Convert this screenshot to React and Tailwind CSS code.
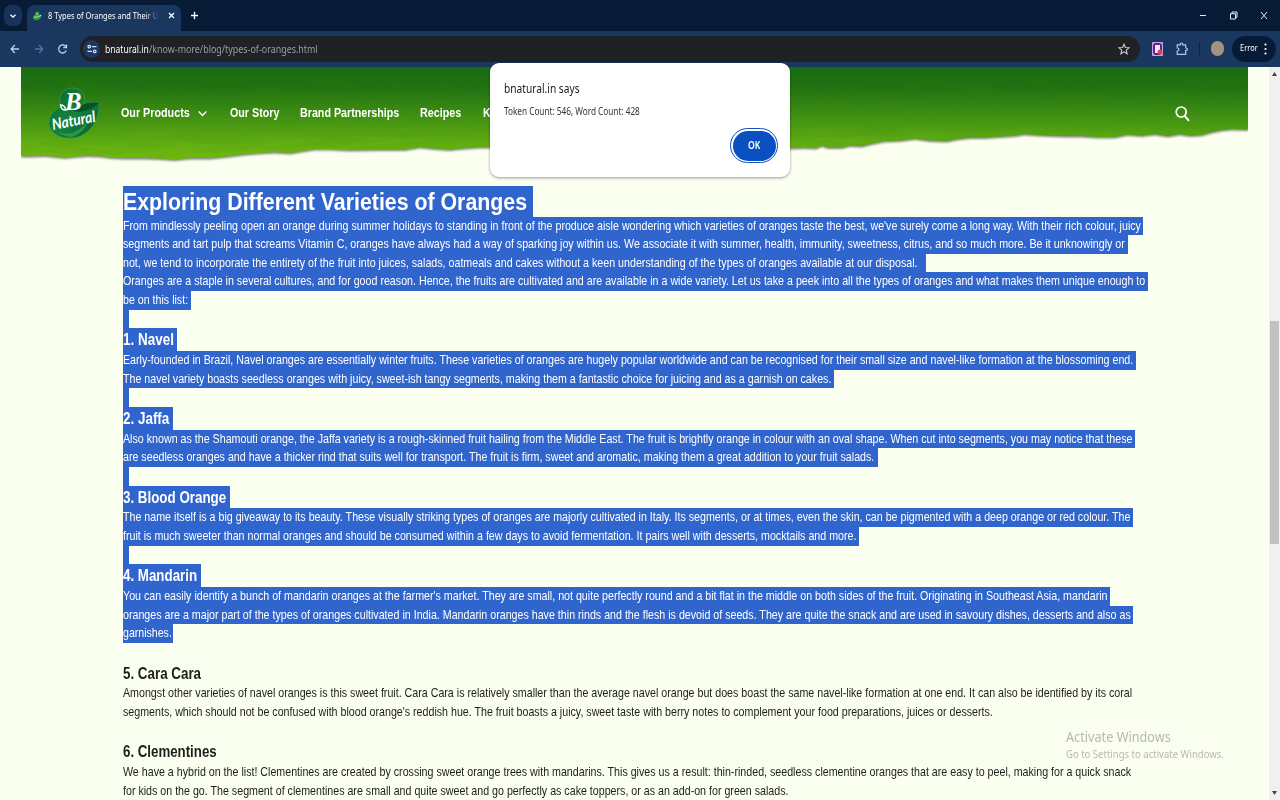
import { useLayoutEffect, useRef } from "react";

// Scales a line of text horizontally so that it spans exactly w pixels.
function Fit({ w, children, className = "" }) {
  const ref = useRef(null);
  useLayoutEffect(() => {
    const el = ref.current;
    el.style.transform = `scaleX(${w / el.offsetWidth})`;
  }, [w, children]);
  return (
    <div className={"shrink-0 " + className} style={{ width: w }}>
      <span ref={ref} className="inline-block origin-left whitespace-pre">{children}</span>
    </div>
  );
}

const X0 = 123.3;

function Line({ l }) {
  const [text, end, bar] = l;
  return (
    <div className="h-[18.61px] leading-[18.6px]">
      <div className={bar ? "h-[18.7px] bg-[#3165ce] text-white" : "h-[18.61px] text-[#1c1f1a]"} style={{ width: (bar || end) - X0 }}>
        <Fit w={end - X0}>{text}</Fit>
      </div>
    </div>
  );
}

function Section({ s }) {
  const sel = s.bar;
  return (
    <section>
      <div className={sel ? "h-[18.61px] w-[6px] bg-[#3165ce]" : "h-[18.61px]"} />
      <h2
        className={sel ? "h-[22.85px] bg-[#3165ce] text-[16px] leading-[23px] font-bold text-white" : "h-[22.85px] text-[16px] leading-[23px] font-bold text-[#1c1f1a]"}
        style={{ width: (s.bar || s.end) - X0 }}
      >
        <Fit w={s.end - X0}>{s.title}</Fit>
      </h2>
      {s.lines.map((l) => <Line key={l[0]} l={l} />)}
    </section>
  );
}

const INTRO = [
  ["From mindlessly peeling open an orange during summer holidays to standing in front of the produce aisle wondering which varieties of oranges taste the best, we've surely come a long way. With their rich colour, juicy", 1141, 1143.5],
  ["segments and tart pulp that screams Vitamin C, oranges have always had a way of sparking joy within us. We associate it with summer, health, immunity, sweetness, citrus, and so much more. Be it unknowingly or", 1125.5, 1128.5],
  ["not, we tend to incorporate the entirety of the fruit into juices, salads, oatmeals and cakes without a keen understanding of the types of oranges available at our disposal.", 917.5, 926.5],
  ["Oranges are a staple in several cultures, and for good reason. Hence, the fruits are cultivated and are available in a wide variety. Let us take a peek into all the types of oranges and what makes them unique enough to", 1145.5, 1148],
  ["be on this list:", 188.5, 191],
];

const SECTIONS = [
  { title: "1. Navel", end: 173.8, bar: 177.3, lines: [
    ["Early-founded in Brazil, Navel oranges are essentially winter fruits. These varieties of oranges are hugely popular worldwide and can be recognised for their small size and navel-like formation at the blossoming end.", 1133.5, 1136],
    ["The navel variety boasts seedless oranges with juicy, sweet-ish tangy segments, making them a fantastic choice for juicing and as a garnish on cakes.", 831.5, 834.5],
  ] },
  { title: "2. Jaffa", end: 169.5, bar: 172.7, lines: [
    ["Also known as the Shamouti orange, the Jaffa variety is a rough-skinned fruit hailing from the Middle East. The fruit is brightly orange in colour with an oval shape. When cut into segments, you may notice that these", 1132.5, 1135],
    ["are seedless oranges and have a thicker rind that suits well for transport. The fruit is firm, sweet and aromatic, making them a great addition to your fruit salads.", 875, 877.8],
  ] },
  { title: "3. Blood Orange", end: 226.8, bar: 230, lines: [
    ["The name itself is a big giveaway to its beauty. These visually striking types of oranges are majorly cultivated in Italy. Its segments, or at times, even the skin, can be pigmented with a deep orange or red colour. The", 1130.5, 1133.3],
    ["fruit is much sweeter than normal oranges and should be consumed within a few days to avoid fermentation. It pairs well with desserts, mocktails and more.", 857, 859],
  ] },
  { title: "4. Mandarin", end: 197.5, bar: 201, lines: [
    ["You can easily identify a bunch of mandarin oranges at the farmer's market. They are small, not quite perfectly round and a bit flat in the middle on both sides of the fruit. Originating in Southeast Asia, mandarin", 1107.7, 1110.5],
    ["oranges are a major part of the types of oranges cultivated in India. Mandarin oranges have thin rinds and the flesh is devoid of seeds. They are quite the snack and are used in savoury dishes, desserts and also as", 1130.7, 1133.3],
    ["garnishes.", 172.3, 173],
  ] },
  { title: "5. Cara Cara", end: 201, lines: [
    ["Amongst other varieties of navel oranges is this sweet fruit. Cara Cara is relatively smaller than the average navel orange but does boast the same navel-like formation at one end. It can also be identified by its coral", 1132.5],
    ["segments, which should not be confused with blood orange's reddish hue. The fruit boasts a juicy, sweet taste with berry notes to complement your food preparations, juices or desserts.", 993.5],
  ] },
  { title: "6. Clementines", end: 217, lines: [
    ["We have a hybrid on the list! Clementines are created by crossing sweet orange trees with mandarins. This gives us a result: thin-rinded, seedless clementine oranges that are easy to peel, making for a quick snack", 1131.7],
    ["for kids on the go. The segment of clementines are small and quite sweet and go perfectly as cake toppers, or as an add-on for green salads.", 789],
  ] },
];

function Leaf({ className }) {
  return (
    <svg className={className} viewBox="0 0 10 10">
      <path d="M1.2 8.6C.4 6.500 1.500 4.800 3 4.600C2.700 2.400 4.200.800 6 .9C7.800 1.200 7.700 3.300 7 4.400L9.700 4C9.900 7 7.500 9.700 4.600 9.700C3 9.800 1.800 9.600 1.200 8.600Z" fill="#2c9a3c" />
      <path d="M2 6.800Q5.500 7.200 9 4.800M4.200 2.400Q6 3 5 4.600" stroke="#c9f0c6" strokeWidth=".9" fill="none" />
    </svg>
  );
}

function Logo() {
  return (
    <svg className="h-[52px] w-[52px] overflow-visible" viewBox="0 0 52 52">
      <defs>
        <linearGradient id="lg" x1="0" y1="0" x2="1" y2="1">
          <stop offset="0" stopColor="#0d6332" /><stop offset=".5" stopColor="#14823f" /><stop offset="1" stopColor="#0a5a2c" />
        </linearGradient>
      </defs>
      <path d="M13 20C9 10 15 1 25 1C34 1 39 9 36 17C41 15 47 15 51 16C52 31 44 45 30 50C15 54 0 47 1 35C2 27 7 22 13 20Z" fill="url(#lg)" stroke="#3ba34b" strokeWidth=".6" />
      <path d="M36 17C33 20 29 21 25 24Q40 27 51 16C44 15 40 16 36 17Z" fill="#075229" />
      <path d="M10 45Q27 51 41 33Q35 47 24 50Q16 50 10 45Z" fill="#3cad55" opacity=".6" />
      <text x="17" y="22.500" fontFamily="Liberation Serif, serif" fontStyle="italic" fontWeight="bold" fontSize="26" fill="#fff" textLength="16.500" lengthAdjust="spacingAndGlyphs">B</text>
      <path d="M20 22.500Q13 24.500 12.500 18Q16.500 18 17.500 22" stroke="#fff" strokeWidth="1.400" fill="none" />
      <text x="5" y="43" transform="rotate(-11 5 43)" fontFamily="Lato, sans-serif" fontStyle="italic" fontWeight="bold" fontSize="15.500" fill="#fff" textLength="44" lengthAdjust="spacingAndGlyphs">Natural</text>
    </svg>
  );
}

const TORN = "M21 67H1248V129.500L1232 129L1222 130L1212 132L1201 135L1190 135.500L1180 134L1168 136L1155 134L1142 135.500L1127 134.500L1115 137L1098 137L1082 136L1065 136L1050 135.500L1038 135L1025 134L1015 135.500L1000 136.500L985 137.500L970 137.500L957 139L947 141L930 140.500L915 138.500L900 140.500L885 141L872 143.500L862 146L850 145.500L842 147.500L828 147.500L822 145.500L816 148L804 147.500L790 148L700 146L600 149L540 147L500 147L480 147L465 148L450 149.500L435 148.500L420 147L405 149.500L380 149.500L350 150L330 149L315 149L302 151L290 153L275 152L258 153L245 154L230 156L210 158L190 158L175 159.500L160 158.500L145 158L125 158L112 157.500L100 156L88 155.500L75 156.500L65 157.500L45 155.500L30 156L21 156Z";

function HeaderArt() {
  return (
    <svg className="absolute inset-x-0 top-0 h-[110px] w-full" viewBox="0 67 1280 110">
      <defs>
        <linearGradient id="g" x1="0" y1="67" x2="0" y2="158" gradientUnits="userSpaceOnUse">
          <stop offset="0" stopColor="#176b11" /><stop offset=".22" stopColor="#207213" /><stop offset=".5" stopColor="#3c8c14" /><stop offset=".75" stopColor="#58a613" /><stop offset="1" stopColor="#72bb12" />
        </linearGradient>
        <filter id="grain" x="0" y="0" width="100%" height="100%">
          <feTurbulence type="fractalNoise" baseFrequency=".02 .16" numOctaves="3" seed="4" />
          <feColorMatrix values="0 0 0 0 .05  0 0 0 0 .25  0 0 0 0 0  0 0 0 1.100 -.38" />
        </filter>
        <filter id="soft" x="-2%" y="-10%" width="104%" height="130%"><feGaussianBlur stdDeviation="1.200" /></filter>
        <clipPath id="torn"><path d={TORN} /></clipPath>
        <clipPath id="band"><path d="M21 67H1248V177H21Z" /></clipPath>
      </defs>
      <g clipPath="url(#band)">
        <path d={TORN} transform="translate(0 1.500)" fill="#7b8570" filter="url(#soft)" />
        <path d={TORN} fill="url(#g)" />
        <g clipPath="url(#torn)"><rect x="21" y="80" width="1227" height="82" filter="url(#grain)" opacity=".3" /></g>
      </g>
    </svg>
  );
}

function TabStrip() {
  return (
    <div className="flex h-[31px] bg-[#071a36]">
      <div className="mt-[5px] ml-1 flex h-[21px] w-[18px] items-center justify-center rounded-[7px] bg-[#183259]">
        <svg className="h-2 w-2" viewBox="0 0 8 8"><path d="M1.500 2.700L4 5.200L6.500 2.700" stroke="#fff" strokeWidth="1.300" fill="none" /></svg>
      </div>
      <div className="mt-[5px] ml-[5px] flex h-[26px] w-[154px] items-center rounded-t-[8px] bg-[#1a3760] pb-[5px]">
        <Leaf className="ml-[5px] h-[11px] w-[10px]" />
        <div className="ml-[6px] w-[111px] mask-r-from-88% mask-r-to-100% font-['Noto_Sans',sans-serif] text-[9.7px] leading-[15px] text-white">
          <Fit w={110.5}>8 Types of Oranges and Their U</Fit>
        </div>
        <svg className="ml-[8.500px] h-[7px] w-[7px]" viewBox="0 0 7 7"><path d="M1 1L6 6M6 1L1 6" stroke="#fff" strokeWidth="1.300" /></svg>
      </div>
      <svg className="mt-[11px] ml-[9px] h-[9px] w-[9px]" viewBox="0 0 9 9"><path d="M4.500 .8V8.200M1 4.500H8" stroke="#fff" strokeWidth="1.300" /></svg>
      <svg className="mt-[10px] mr-[11px] ml-auto h-[12px] w-[70px]" viewBox="0 0 70 12" fill="none" stroke="#e8edf5" strokeWidth="1">
        <path d="M1 5.500H7" />
        <path d="M31.500 3.700H36.500V9H31.500ZM33 3.500V2H38V7.300H36.800" />
        <path d="M62 2L68 9M68 2L62 9" />
      </svg>
    </div>
  );
}

function Toolbar() {
  return (
    <div className="flex h-[36px] items-center bg-[#1a3760] pr-1 pb-[1px]">
      <svg className="ml-[10px] h-[12px] w-[58px]" viewBox="0 0 58 12" fill="none" strokeWidth="1.300">
        <path d="M9 6H1.500M4.800 2L1.200 6L4.800 10" stroke="#b9d2f5" />
        <path d="M25 6H32.500M29.200 2L32.800 6L29.200 10" stroke="#53719b" />
        <path d="M56 4A3.900 4 0 1 0 56.200 7.500M56.500 1.500V4.600H53.200" stroke="#b9d2f5" />
      </svg>
      <div className="ml-[12px] flex h-[26px] w-[1060px] items-center rounded-full bg-[#202124]">
        <div className="ml-[3px] flex h-[18px] w-[17px] items-center justify-center rounded-full bg-[#1c3761]">
          <svg className="h-[10px] w-[10px]" viewBox="0 0 10 10" fill="none" stroke="#d5e3fa" strokeWidth="1.200"><circle cx="2.300" cy="2.600" r="1.300" /><path d="M5 2.600H9.500M.5 7.400H5" /><circle cx="7.700" cy="7.400" r="1.300" /></svg>
        </div>
        <div className="ml-[5px] flex font-['Noto_Sans',sans-serif] text-[10.8px] leading-[16px]">
          <Fit w={43.5} className="text-white">bnatural.in</Fit>
          <Fit w={169} className="text-[#9b9ea3]">/know-more/blog/types-of-oranges.html</Fit>
        </div>
        <svg className="mr-[10px] ml-auto h-[12px] w-[12px]" viewBox="0 0 12 12"><path d="M6 1.200L7.400 4.500L11 4.800L8.300 7.200L9.100 10.800L6 8.900L2.900 10.800L3.700 7.200L1 4.800L4.600 4.500Z" fill="none" stroke="#c8cace" strokeWidth="1.100" /></svg>
      </div>
      <svg className="ml-[12px] h-[14px] w-[11px]" viewBox="0 0 11 14"><rect width="11" height="14" rx="1" fill="#c7a6e0" /><rect x="1" y="1" width="9" height="12" rx="3" fill="#5b2399" /><rect x="3" y="3" width="5" height="8" fill="#f3e7fb" /><circle cx="8" cy="10" r="2.500" fill="#e5453d" /></svg>
      <svg className="ml-[13px] h-[14px] w-[12px]" viewBox="0 0 12 14"><path d="M1.200 2.800H4.300Q4.300 1 5.500 1Q6.700 1 6.700 2.800H9.700V6Q11.400 6 11.400 7.300Q11.400 8.600 9.700 8.600V12.400H1.200V9Q3 9 3 7.500Q3 6 1.200 6Z" fill="none" stroke="#a9c8f3" strokeWidth="1.200" /></svg>
      <div className="ml-[11px] h-[13px] w-px bg-[#0d2243]" />
      <div className="ml-[11px] h-[15px] w-[13px] rounded-full bg-[#a59282]" />
      <div className="ml-[8px] flex h-[26px] w-[44px] items-center rounded-full bg-[#071a36] pl-2 font-['Noto_Sans',sans-serif] text-[9.8px] text-white">
        <Fit w={17.5}>Error</Fit>
        <svg className="ml-[6.500px] h-[12px] w-[3px]" viewBox="0 0 3 12" fill="#fff"><circle cx="1.500" cy="1.500" r="1.100" /><circle cx="1.500" cy="6" r="1.100" /><circle cx="1.500" cy="10.500" r="1.100" /></svg>
      </div>
    </div>
  );
}

export default function App() {
  return (
    <div className="relative flex h-[800px] w-[1280px] flex-col overflow-hidden bg-[#fbfff0] font-['Liberation_Sans',Arial,sans-serif]">
      <TabStrip />
      <Toolbar />
      <div className="flex min-h-0 flex-1">
        <div className="relative w-[1268.5px] shrink-0">
          <div className="relative h-[118.8px] w-[1280px]">
            <HeaderArt />
            <nav className="relative flex h-[92px] items-center pl-[47.5px] text-[13.2px] font-bold text-white">
              <Logo />
              <Fit w={68.5} className="ml-[21px]">Our Products</Fit>
              <svg className="ml-[8.5px] h-[7px] w-[9px]" viewBox="0 0 9 7"><path d="M.7 1.500L4.500 5.500L8.300 1.500" fill="none" stroke="#fff" strokeWidth="1.300" /></svg>
              <Fit w={49.5} className="ml-[23px]">Our Story</Fit>
              <Fit w={99} className="ml-[21px]">Brand Partnerships</Fit>
              <Fit w={41.5} className="ml-[21px]">Recipes</Fit>
              <Fit w={8} className="ml-[21px]">K</Fit>
              <svg className="ml-[684px] h-[17px] w-[15px]" viewBox="0 0 15 17"><circle cx="6.200" cy="7" r="5" fill="none" stroke="#fff" strokeWidth="1.700" /><path d="M9.800 11L14 15.800" stroke="#fff" strokeWidth="1.900" /></svg>
            </nav>
          </div>
          <article className="pl-[123.3px] text-[13.4px]">
            <h1 className="h-[30.8px] w-[409.7px] bg-[#3165ce] text-[24.6px] leading-[31px] font-bold text-white">
              <Fit w={404}>Exploring Different Varieties of Oranges</Fit>
            </h1>
            {INTRO.map((l) => <Line key={l[0]} l={l} />)}
            {SECTIONS.map((s) => <Section key={s.title} s={s} />)}
          </article>
        </div>
        <div className="relative flex w-[11.5px] shrink-0 flex-col items-center justify-between bg-[#f0f0f0] py-[5px]">
          <svg className="h-[4px] w-[5px]" viewBox="0 0 5 4"><path d="M0 4L2.500 0L5 4Z" fill="#444" /></svg>
          <div className="absolute top-[254px] h-[223px] w-[9px] bg-[#c1c1c1]" />
          <svg className="h-[4px] w-[5px]" viewBox="0 0 5 4"><path d="M0 0L2.500 4L5 0Z" fill="#444" /></svg>
        </div>
      </div>
      <div className="absolute top-[63px] left-[490px] flex h-[114px] w-[300px] flex-col rounded-[9px] bg-white px-[14px] pt-[17px] font-['Noto_Sans',sans-serif] shadow-[0_1px_3px_rgba(0,0,0,0.4)]">
        <Fit w={75.5} className="text-[12px] leading-[18px] text-[#1c1c1c]">bnatural.in says</Fit>
        <Fit w={135.5} className="mt-[6px] text-[10px] leading-[15px] text-[#333]">Token Count: 546, Word Count: 428</Fit>
        <div className="mt-[9px] -mr-[2px] flex h-[35px] w-[48px] items-center justify-center self-end rounded-full border-[1.5px] border-[#0b50c4] bg-white p-[1.5px]">
          <div className="flex h-full w-full items-center justify-center rounded-full bg-[#0b50c0] text-[10px] font-semibold text-white">
            <Fit w={12}>OK</Fit>
          </div>
        </div>
      </div>
      <div className="absolute top-[726px] left-[1065.5px] font-['Noto_Sans',sans-serif] text-[#b6b9b1]">
        <Fit w={105} className="text-[14.5px] leading-[20px]">Activate Windows</Fit>
        <Fit w={158} className="text-[10.8px] leading-[16px]">Go to Settings to activate Windows.</Fit>
      </div>
    </div>
  );
}
